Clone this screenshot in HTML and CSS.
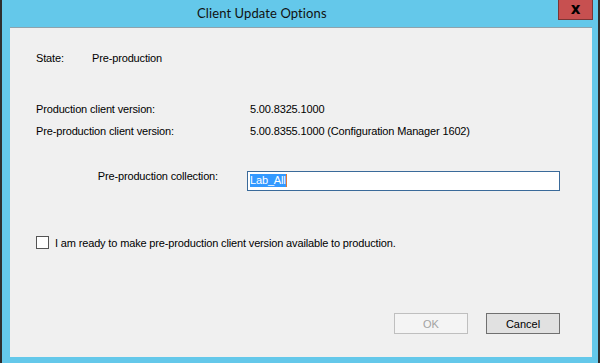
FILE: index.html
```html
<!DOCTYPE html>
<html lang="en">
<head>
  <meta charset="UTF-8" />
  <title>Client Update Options</title>
  <link rel="stylesheet" href="styles.css">
</head>
<body>
  <div class="window">
    <div class="title-bar">
      <div class="title">Client Update Options</div>
      <button class="close-btn">x</button>
    </div>

    <div class="client">
      <div class="row state-row">
        <span class="state-label">State:</span>
        <span>Pre-production</span>
      </div>

      <div class="row version-row first">
        <span class="version-label">Production client version:</span>
        <span>5.00.8325.1000</span>
      </div>
      <div class="row version-row">
        <span class="version-label">Pre-production client version:</span>
        <span>5.00.8355.1000 (Configuration Manager 1602)</span>
      </div>

      <div class="row collection-row">
        <span class="collection-label">Pre-production collection:</span>
        <div class="textbox"><span class="selected">Lab_All</span></div>
      </div>

      <label class="row check-row">
        <span class="checkbox"></span>
        <span>I am ready to make pre-production client version available to production.</span>
      </label>

      <div class="buttons">
        <button class="btn" disabled>OK</button>
        <button class="btn">Cancel</button>
      </div>
    </div>
  </div>
</body>
</html>
```

FILE: styles.css
```css
* {
  box-sizing: border-box;
}
body {
  margin: 0;
  background: #fff;
  font-family: "Liberation Sans", Arial, sans-serif;
  font-size: 11px;
  line-height: 13px;
  letter-spacing: -0.15px;
  color: #000;
}
.window {
  width: 600px;
  height: 363px;
  background: #64c8ea;
  border-left: 2px solid #2e2e2e;
  border-right: 2px solid #2e2e2e;
  display: flex;
  flex-direction: column;
}
.title-bar {
  height: 27px;
  display: flex;
  align-items: flex-start;
}
.title {
  flex: 1;
  padding: 4px 0 0 195px;
  font-family: Lato, "Noto Sans", sans-serif;
  font-size: 13px;
  line-height: 18px;
  letter-spacing: 0.1px;
  color: #111;
}
.close-btn {
  width: 35px;
  height: 20px;
  margin-right: 5px;
  padding: 0;
  background: #c75050;
  border: 1px solid #7a3535;
  border-top: none;
  font-family: "DejaVu Sans", sans-serif;
  font-size: 15px;
  font-weight: bold;
  line-height: 15px;
  color: #000;
}
.client {
  width: 582px;
  height: 330px;
  margin-left: 8px;
  background: #f0f0f0;
  border-top: 1px solid #8ea3ad;
  padding: 24px 32px 23px 26px;
  display: flex;
  flex-direction: column;
}
.row {
  display: flex;
  align-items: flex-start;
}
.state-label {
  width: 56px;
}
.version-row {
  margin-top: 9px;
}
.version-row.first {
  margin-top: 38px;
}
.version-label {
  width: 214px;
}
.collection-row {
  margin-top: 32px;
}
.collection-label {
  width: 182px;
  text-align: right;
}
.textbox {
  width: 313px;
  height: 20px;
  margin: 1px 0 0 29px;
  background: #fff;
  border: 1px solid #3a6a9a;
  padding: 2px 0 0 2px;
}
.selected {
  display: inline-block;
  background: #3399ff;
  color: #fff;
  border-right: 1px solid #e07a30;
}
.check-row {
  margin-top: 46px;
  align-items: flex-start;
}
.checkbox {
  width: 13px;
  height: 13px;
  margin: -1px 6px 0 0;
  background: #fff;
  border: 1px solid #555;
}
.buttons {
  margin-top: auto;
  display: flex;
  justify-content: flex-end;
  gap: 18px;
}
.btn {
  width: 74px;
  height: 21px;
  padding: 0;
  font-family: "Liberation Sans", Arial, sans-serif;
  font-size: 11px;
  background: #e1e1e1;
  border: 1px solid #707070;
  color: #000;
}
.btn:disabled {
  background: #f4f4f4;
  border-color: #bfbfbf;
  color: #a3a3a3;
}
```
